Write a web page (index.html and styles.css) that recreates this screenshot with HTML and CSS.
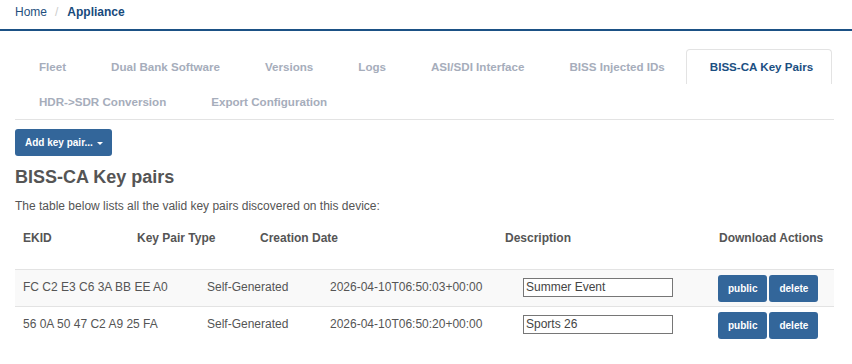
FILE: index.html
```html
<!DOCTYPE html>
<html>
<head>
<meta charset="utf-8">
<link rel="stylesheet" href="styles.css">
</head>
<body>
<div class="breadcrumb">
  <span class="crumb">Home</span><span class="sep">/</span><span class="crumb current">Appliance</span>
</div>
<div class="page">
  <div class="tabs-wrap">
    <ul class="tabs">
      <li class="tab">Fleet</li>
      <li class="tab">Dual Bank Software</li>
      <li class="tab">Versions</li>
      <li class="tab">Logs</li>
      <li class="tab">ASI/SDI Interface</li>
      <li class="tab">BISS Injected IDs</li>
      <li class="tab active">BISS-CA Key Pairs</li>
      <li class="tab">HDR-&gt;SDR Conversion</li>
      <li class="tab">Export Configuration</li>
    </ul>
  </div>
  <button class="btn btn-add">Add key pair... <span class="caret"></span></button>
  <h2 class="title">BISS-CA Key pairs</h2>
  <p class="intro">The table below lists all the valid key pairs discovered on this device:</p>
  <div class="table">
    <div class="thead">
      <div class="th">EKID</div>
      <div class="th">Key Pair Type</div>
      <div class="th">Creation Date</div>
      <div class="th">Description</div>
      <div class="th">Download Actions</div>
    </div>
    <div class="row striped">
      <div class="td">FC C2 E3 C6 3A BB EE A0</div>
      <div class="td">Self-Generated</div>
      <div class="td">2026-04-10T06:50:03+00:00</div>
      <div class="td"><input class="desc" type="text" value="Summer Event"></div>
      <div class="td actions"><button class="btn btn-sm">public</button><button class="btn btn-sm">delete</button></div>
    </div>
    <div class="row">
      <div class="td">56 0A 50 47 C2 A9 25 FA</div>
      <div class="td">Self-Generated</div>
      <div class="td">2026-04-10T06:50:20+00:00</div>
      <div class="td"><input class="desc" type="text" value="Sports 26"></div>
      <div class="td actions"><button class="btn btn-sm">public</button><button class="btn btn-sm">delete</button></div>
    </div>
  </div>
</div>
</body>
</html>
```

FILE: styles.css
```css
* { box-sizing: border-box; }
body {
  margin: 0;
  font-family: "Liberation Sans", Arial, sans-serif;
  font-size: 12px;
  color: #555;
  background: #fff;
}
.breadcrumb {
  height: 31px;
  padding: 4px 15px 0;
  line-height: 16px;
  border-bottom: 2px solid #1b5185;
}
.crumb { color: #1f4f7e; }
.crumb.current { font-weight: bold; color: #174a7c; }
.sep { color: #ccc; padding: 0 9px 0 8px; }
.page { padding: 18px 18px 0 15px; }
.tabs-wrap { border-bottom: 1px solid #e3e3e3; }
.tabs {
  list-style: none;
  margin: 0 -6px 0 0;
  padding: 0;
  display: flex;
  flex-wrap: wrap;
}
.tab {
  height: 35px;
  line-height: 33px;
  padding: 0 18px 0 23px;
  margin-right: 2px;
  border: 1px solid transparent;
  border-bottom: 0;
  font-weight: bold;
  font-size: 11.6px;
  color: #a6adbb;
}
.tab.active {
  color: #1b4f82;
  border-color: #e3e3e3;
  border-radius: 4px 4px 0 0;
  background: #fff;
}
.btn {
  font-family: "Liberation Sans", Arial, sans-serif;
  font-weight: bold;
  font-size: 10px;
  color: #fff;
  background: #33669a;
  border: 0;
  border-radius: 3px;
}
.btn-add {
  display: block;
  margin-top: 9px;
  height: 27px;
  width: 97px;
  padding: 0 0 0 10px;
  text-align: left;
}
.caret {
  display: inline-block;
  width: 0;
  height: 0;
  margin-left: 1px;
  vertical-align: middle;
  border-top: 3px solid #fff;
  border-left: 3px solid transparent;
  border-right: 3px solid transparent;
}
.title {
  margin: 11px 0 0;
  font-size: 18px;
  line-height: 20px;
  font-weight: bold;
  color: #555;
}
.intro {
  margin: 11px 0 0;
  line-height: 17px;
}
.table { margin-top: 7px; }
.thead {
  display: grid;
  grid-template-columns: 114px 123px 245px 214px 1fr;
  height: 47px;
  padding-top: 8px;
  font-weight: bold;
  line-height: 17px;
}
.th { padding-left: 8px; }
.row {
  display: grid;
  grid-template-columns: 184px 123px 193px 195px 1fr;
  height: 37px;
  border-top: 1px solid #e3e3e3;
  align-items: center;
  line-height: 14px;
}
.row.striped { background: #f9f9f9; }
.td { padding-left: 8px; padding-bottom: 2px; }
.td.actions { padding-bottom: 0; }
.desc {
  display: block;
  width: 150px;
  height: 19px;
  padding: 0 2px;
  border: 1px solid #767676;
  font-family: "Liberation Sans", Arial, sans-serif;
  font-size: 12px;
  color: #444;
  background: #fff;
}
.actions { display: flex; gap: 2px; }
.btn-sm {
  height: 27px;
  padding: 0 10px;
}
```
